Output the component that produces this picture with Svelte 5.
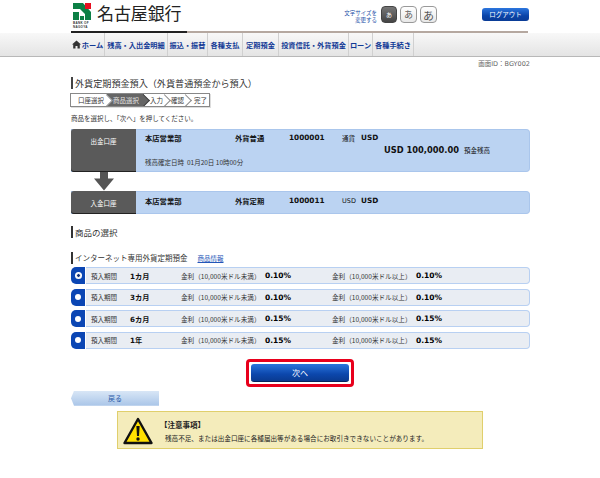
<script>
  const nav = ['残高・入出金明細','振込・振替','各種支払','定期預金','投資信託・外貨預金','ローン','各種手続き'];
  const steps = [
    { t: '口座選択', c: 'done' },
    { t: '商品選択', c: 'now' },
    { t: '入力', c: 'todo' },
    { t: '確認', c: 'todo' },
    { t: '完了', c: 'last' }
  ];
  const rows = [
    { term: '1カ月', a: '0.10%', b: '0.10%', on: true },
    { term: '3カ月', a: '0.10%', b: '0.10%', on: false },
    { term: '6カ月', a: '0.15%', b: '0.15%', on: false },
    { term: '1年', a: '0.15%', b: '0.15%', on: false }
  ];
</script>

<div class="page">
  <header class="head">
    <div class="brand">
      <div class="logo">
        <svg width="20" height="27" viewBox="0 0 20 27">
          <path d="M1 2H11L19 11V19H13V13L8 8H1Z" fill="#0c7f45"/>
          <rect x="1" y="11" width="6" height="8" fill="#0c7f45"/>
          <rect x="8" y="15" width="4" height="4" fill="#0c7f45"/>
          <rect x="13" y="2" width="6" height="6" fill="#e60f20"/>
          <text x="1" y="23.200" class="tiny">BANK OF</text>
          <text x="1" y="26.600" class="tiny">NAGOYA</text>
        </svg>
      </div>
      <div class="bank">名古屋銀行</div>
    </div>
    <div class="tools">
      <div class="fs-label">文字サイズを<br>変更する</div>
      <div class="fs fs-s">あ</div>
      <div class="fs fs-m">あ</div>
      <div class="fs fs-l">あ</div>
      <div class="logout">ログアウト</div>
    </div>
  </header>
  <div class="rule"><span></span></div>

  <nav class="nav">
    <div class="nav-in">
      <div class="nav-item">
        <svg width="9" height="9" viewBox="0 0 9 9"><path d="M0 4.500 4.500 .5 9 4.500H7.800V8.500H5.500V6H3.500V8.500H1.200V4.500Z" fill="#333"/></svg>
        <span>ホーム</span>
      </div>
      {#each nav as n}
        <div class="nav-item"><span>{n}</span></div>
      {/each}
    </div>
  </nav>

  <main class="main">
    <div class="screen-id">画面ID：BGY002</div>

    <h1 class="title">外貨定期預金預入（外貨普通預金から預入）</h1>

    <div class="steps">
      {#each steps as s}
        <div class="step {s.c}"><span>{s.t}</span></div>
      {/each}
    </div>

    <p class="lead">商品を選択し、「次へ」を押してください。</p>

    <section class="card tall">
      <div class="side">出金口座</div>
      <div class="body">
        <div class="line">
          <b class="c-branch">本店営業部</b>
          <b class="c-type">外貨普通</b>
          <b class="c-num">1000001</b>
          <span class="c-lab">通貨</span>
          <b class="c-cur">USD</b>
        </div>
        <div class="line amount"><b>USD 100,000.00</b><span>預金残高</span></div>
        <div class="line when">残高確定日時&nbsp; 01月20日 10時00分</div>
      </div>
    </section>

    <div class="arrow">
      <svg width="20" height="19" viewBox="0 0 20 19"><path d="M6 0H14V6.500H20L10 18.500 0 6.500H6Z" fill="#555"/></svg>
    </div>

    <section class="card short">
      <div class="side">入金口座</div>
      <div class="body">
        <div class="line">
          <b class="c-branch">本店営業部</b>
          <b class="c-type">外貨定期</b>
          <b class="c-num">1000011</b>
          <span class="c-lab">USD</span>
          <b class="c-cur">USD</b>
        </div>
      </div>
    </section>

    <h2 class="sub first">商品の選択</h2>

    <div class="sub-row">
      <h3 class="sub small">インターネット専用外貨定期預金</h3>
      <a class="link" href="#top">商品情報</a>
    </div>

    <div class="rows">
      {#each rows as r}
        <div class="row">
          <div class="pick"><i class="radio" class:on={r.on}></i></div>
          <div class="cells">
            <span class="r-lab">預入期間</span>
            <b class="r-term">{r.term}</b>
            <span class="r-k">金利（10,000米ドル未満）</span>
            <b class="r-v">{r.a}</b>
            <span class="r-k">金利（10,000米ドル以上）</span>
            <b class="r-v">{r.b}</b>
          </div>
        </div>
      {/each}
    </div>

    <div class="next-wrap">
      <div class="next-ring"><div class="next">次へ</div></div>
    </div>

    <div class="back">戻る</div>

    <aside class="notice">
      <svg width="30" height="28" viewBox="0 0 30 28">
        <path d="M15 2 28.500 26H1.500Z" fill="#ffe000" stroke="#111" stroke-width="2.400" stroke-linejoin="round"/>
        <path d="M13.400 9H16.600L16 19H14Z" fill="#111"/>
        <circle cx="15" cy="22" r="1.700" fill="#111"/>
      </svg>
      <div class="notice-text">
        <b>【注意事項】</b>
        <p>残高不足、または出金口座に各種届出等がある場合にお取引きできないことがあります。</p>
      </div>
    </aside>
  </main>
</div>

<style>
  :global(body) { margin: 0; background: #fff; }
  .page {
    width: 600px; height: 478px; overflow: hidden; background: #fff; color: #222;
    font-family: "DejaVu Sans", "Noto Sans CJK JP", sans-serif; font-size: 7px;
  }
  .head { display: flex; justify-content: space-between; height: 31px; padding: 0 71px 0 72px; box-sizing: border-box; }
  .brand { display: flex; gap: 5px; padding-top: 1px; }
  .logo { width: 20px; height: 27px; }
  .tiny { font-size: 3px; font-weight: 700; fill: #333; font-family: "Liberation Sans", sans-serif; letter-spacing: .3px; }
  .bank { font-size: 17px; line-height: 24px; letter-spacing: -.1px; color: #222; font-family: "Noto Sans CJK JP", sans-serif; }
  .tools { display: flex; align-items: flex-start; padding-top: 6px; }
  .fs-label { font-size: 5.500px; line-height: 7px; color: #1d4fa8; text-align: right; margin: 4px 4px 0 0; font-family: "Noto Sans CJK JP", sans-serif; }
  .fs {
    width: 15px; height: 15px; border: 1px solid #999; border-radius: 4px; box-sizing: content-box;
    display: flex; align-items: center; justify-content: center; color: #555;
    background: linear-gradient(#fff, #e8e8e8); margin-right: 3px; font-family: "Noto Sans CJK JP", sans-serif;
  }
  .fs-s { width: 14px; background: linear-gradient(#777, #444); color: #fff; font-size: 6px; border-color: #444; margin-right: 3px; }
  .fs-m { font-size: 9px; }
  .fs-l { font-size: 11px; margin-right: 0; }
  .logout {
    width: 47px; height: 13px; margin: 2px 0 0 45px; border-radius: 3px; color: #fff; font-size: 6.500px; line-height: 13px; text-align: center;
    background: linear-gradient(#2c76de, #0a44a8 60%, #0a3c96); font-family: "Noto Sans CJK JP", sans-serif;
  }
  .rule { margin: 0 72px 0 71px; height: 2px; background: #b5a8a0; }
  .rule span { display: block; width: 116px; height: 2px; background: #222; }

  .nav { height: 24px; background: linear-gradient(#f8f8f8, #e4e4e4); border-bottom: 1px solid #b8b8b8; box-sizing: border-box; }
  .nav-in {
    margin-left: 71px; height: 23px; display: grid;
    grid-template-columns: 34px 63px 40px 35px 36px 70px 24px 41px; width: 343px;
  }
  .nav-item {
    display: flex; align-items: center; justify-content: center; gap: 1px; white-space: nowrap;
    border-right: 1px solid #d0d0d0; box-sizing: border-box; color: #123a96; font-weight: 700; font-size: 7.200px; font-family: "Noto Sans CJK JP", sans-serif;
  }

  .main { padding: 0 70px 0 71px; }
  .screen-id { text-align: right; color: #666; font-size: 6.500px; line-height: 9px; margin-top: 3px; }
  .title {
    margin: 8px 0 0; border-left: 2px solid #444; padding-left: 2px; font-weight: 400; font-size: 9.100px; line-height: 12px; height: 12px;
    color: #333; white-space: nowrap; font-family: "Noto Sans CJK JP", sans-serif;
  }
  .steps { display: flex; margin: 4px 0 0 -1px; width: 140px; height: 14px; border: 1px solid #888; box-sizing: border-box; box-shadow: 1px 1px 0 #ddd; overflow: hidden; }
  .step {
    position: relative; display: flex; align-items: center; font-size: 6.500px; color: #333; height: 12px; box-sizing: border-box; font-family: "Noto Sans CJK JP", sans-serif;
  }
  .step span { position: relative; z-index: 2; }
  .step::after {
    content: ""; position: absolute; right: -4px; top: 1.500px; width: 9px; height: 9px; transform: rotate(45deg);
    border-top: 1px solid #888; border-right: 1px solid #888; background: #fff; box-sizing: border-box; z-index: 1;
  }
  .step.done { width: 36px; padding-left: 7px; z-index: 3; }
  .step.now { width: 37px; padding-left: 6px; background: #666; color: #e2e2e2; z-index: 2; }
  .step.now::after { background: #666; border-color: #444; }
  .step.todo { width: 21px; padding-left: 6px; z-index: 1; }
  .step.last { flex: 1; padding-left: 8px; }
  .step.last::after { display: none; }
  .lead { margin: 6px 0 0; font-size: 6.500px; line-height: 10px; color: #333; font-family: "Noto Sans CJK JP", sans-serif; }

  .card { display: flex; background: #bbd3f2; border-radius: 0 4px 4px 0; border: 1px solid #aac6ec; border-left: 0; box-sizing: border-box; }
  .tall { height: 43px; margin-top: 6px; }
  .short { height: 23px; }
  .short .body { padding-top: 3px; }
  .side {
    width: 65px; flex: none; background: #5a5a5a; color: #fff; text-align: center; border-radius: 3px 0 0 3px; margin: -1px 0; box-shadow: inset 0 -1px 0 #222;
    font-size: 6.500px; padding-top: 7px; line-height: 10px; box-sizing: border-box; font-family: "Noto Sans CJK JP", sans-serif;
  }
  .body { flex: 1; padding: 2px 0 0 9px; color: #111; }
  .line { display: flex; align-items: center; height: 11px; white-space: nowrap; }
  .line b { font-size: 7.300px; font-weight: 700; }
  .c-branch { width: 90px; font-family: "Noto Sans CJK JP", sans-serif; }
  .c-type { width: 54px; font-family: "Noto Sans CJK JP", sans-serif; }
  .c-num { width: 53px; }
  .c-lab { width: 19px; font-size: 6.500px; }
  .c-cur { width: 20px; }
  .amount { padding-left: 239px; height: 13px; gap: 5px; }
  .amount b { font-size: 8.300px; }
  .amount span { font-size: 6.500px; font-family: "Noto Sans CJK JP", sans-serif; }
  .when { font-size: 6.500px; font-family: "Noto Sans CJK JP", sans-serif; color: #333; }
  .arrow { height: 19px; padding-left: 23px; }
  .arrow svg { display: block; }

  .sub { margin: 0; font-weight: 400; border-left: 2px solid #333; padding-left: 2px; color: #333; font-family: "Noto Sans CJK JP", sans-serif; white-space: nowrap; }
  .first { margin-top: 12px; font-size: 8.500px; line-height: 12px; }
  .sub-row { display: flex; align-items: center; margin-top: 14px; height: 12px; }
  .small { font-size: 7.500px; line-height: 12px; }
  .link { margin-left: 10px; font-size: 6.500px; color: #2356b8; font-family: "Noto Sans CJK JP", sans-serif; }
  .rows { margin-top: 3px; display: flex; flex-direction: column; gap: 4.600px; }
  .row { display: flex; height: 17px; }
  .pick { width: 14px; flex: none; background: #0b46b4; border-radius: 5px 0 0 5px; display: flex; align-items: center; justify-content: center; }
  .radio { width: 6px; height: 6px; border-radius: 50%; background: #fff; box-sizing: border-box; }
  .radio.on { border: 1.500px solid #fff; background: #12307a; box-shadow: 0 0 0 1px #fff; width: 5px; height: 5px; }
  .cells {
    flex: 1; margin-left: 1px; display: flex; align-items: center; white-space: nowrap; background: #e9edf3; border: 1px solid #b8d0f2; border-left: 0; border-radius: 0 4px 4px 0; box-sizing: border-box; padding-left: 5px; color: #333;
    font-family: "DejaVu Sans", "Noto Sans CJK JP", sans-serif;
  }
  .r-lab { width: 39px; font-size: 6.500px; font-family: "Noto Sans CJK JP", sans-serif; }
  .r-term { width: 51px; font-size: 7.200px; color: #111; }
  .r-k { width: 84px; font-size: 6.600px; font-family: "Noto Sans CJK JP", sans-serif; }
  .r-v { width: 67px; font-size: 7.500px; color: #000; }

  .next-wrap { display: flex; justify-content: center; margin-top: 10px; padding-right: 1px; }
  .next-ring { border: 3px solid #e8001c; border-radius: 4px; padding: 2px; width: 108px; height: 28px; box-sizing: border-box; }
  .next {
    height: 100%; border-radius: 3px; color: #fff; text-align: center; font-size: 8px; line-height: 18px;
    background: linear-gradient(#2a75dc, #0c47ac 60%, #0a3a90); font-family: "Noto Sans CJK JP", sans-serif; border-bottom: 1px solid #06245c; box-sizing: border-box;
  }
  .back {
    width: 88px; height: 15px; margin-top: 4px; text-align: center; font-size: 7px; line-height: 15px; color: #2a5aa8; background: linear-gradient(#d8e6f6, #a9c5e8);
    clip-path: polygon(3px 0, 100% 0, 100% 100%, 3px 100%, 0 50%); font-family: "Noto Sans CJK JP", sans-serif;
  }
  .notice {
    display: flex; align-items: flex-start; gap: 9px; width: 366px; height: 38px; margin: 5px 0 0 46px; box-sizing: border-box; padding: 5px 0 0 5px;
    background: #f4ecbb; border: 1px solid #e0cf6c; font-family: "Noto Sans CJK JP", sans-serif;
  }
  .notice svg { flex: none; }
  .notice-text { color: #222; padding-top: 3px; }
  .notice-text b { display: block; font-size: 7.500px; line-height: 10px; margin-left: -2px; }
  .notice-text p { margin: 3px 0 0 3px; font-size: 6.600px; line-height: 10px; white-space: nowrap; }
</style>
